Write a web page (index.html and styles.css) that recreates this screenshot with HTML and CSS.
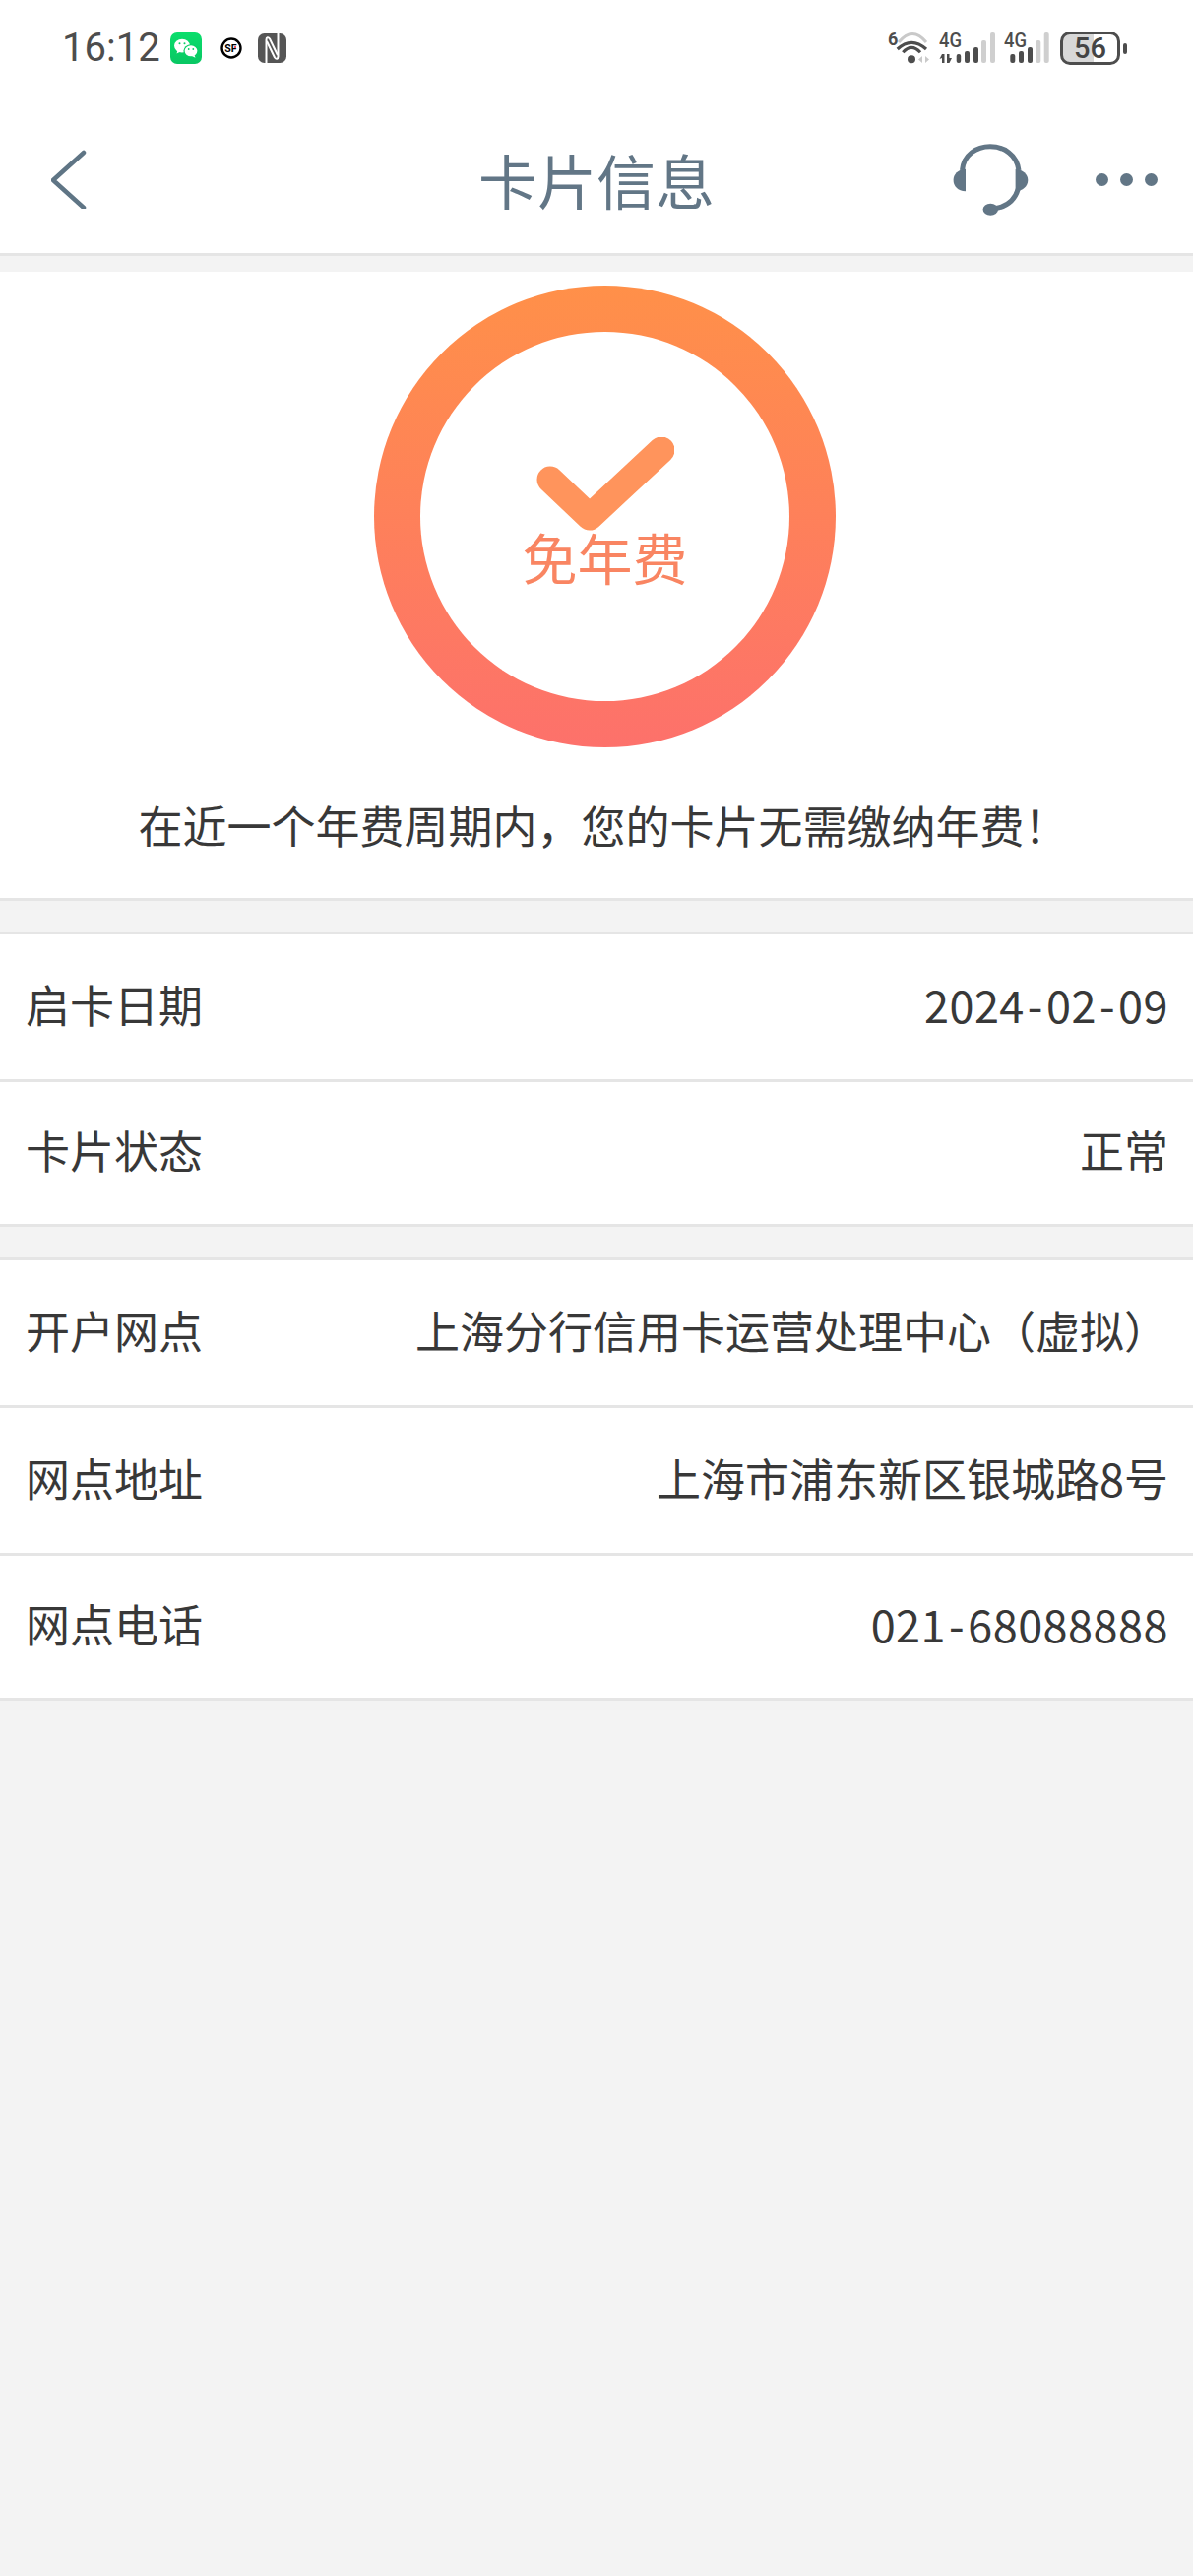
FILE: index.html
```html
<!DOCTYPE html>
<html>
<head>
<title>卡片信息</title>
<meta charset="utf-8">
<link rel="stylesheet" href="styles.css">
</head>
<body>

<div class="head">
    <div class="status">
        <span class="time">16:12</span>
        <svg class="ic-wechat" width="32" height="32" viewBox="0 0 32 32">
            <defs><linearGradient id="wx" x1="0" y1="0" x2="0" y2="1"><stop offset="0" stop-color="#0ade6c"/><stop offset="1" stop-color="#09c763"/></linearGradient></defs>
            <rect width="32" height="32" rx="7" fill="url(#wx)"/>
            <ellipse cx="12" cy="13.6" rx="8" ry="6.8" fill="#fff"/>
            <path d="M7.5 18l-1 3.5 4-2z" fill="#fff"/>
            <ellipse cx="21" cy="18.8" rx="7.6" ry="6.6" fill="#09d066"/>
            <ellipse cx="21" cy="18.8" rx="6.4" ry="5.5" fill="#fff"/>
            <path d="M24.5 23l1 2.8-3.6-1.8z" fill="#fff"/>
            <circle cx="9.5" cy="11.3" r="1" fill="#09d066"/>
            <circle cx="14.5" cy="11.3" r="1" fill="#09d066"/>
            <circle cx="18.7" cy="17" r=".9" fill="#09d066"/>
            <circle cx="23.3" cy="17" r=".9" fill="#09d066"/>
        </svg>
        <svg class="ic-sf" width="22" height="22" viewBox="0 0 22 22">
            <circle cx="11" cy="11" r="9.5" fill="none" stroke="#000" stroke-width="2.4"/>
            <text x="4.2" y="15" class="sf-text">SF</text>
            <circle cx="15" cy="10" r="1" fill="#e8202c"/>
        </svg>
        <svg class="ic-nfc" width="29" height="30" viewBox="0 0 29 30">
            <rect width="29" height="30" rx="6.5" fill="#555"/>
            <path d="M8.500 30V6.500C8.500 4 10.500 3.500 12 5.500L20 22" fill="none" stroke="#fff" stroke-width="2"/>
            <path d="M20.500 0V23.500C20.500 26 18.500 26.500 17 24.500L9 8" fill="none" stroke="#fff" stroke-width="2"/>
        </svg>
        <div class="status-right">
            <svg width="43" height="42" viewBox="0 -4 43 42">
                <text x="0" y="13.500" class="net-text six">6</text>
                <path d="M11 11Q25-6 39 11" fill="none" stroke="#c9c9c9" stroke-width="3"/>
                <path d="M9.700 18Q24 4.600 39 18" fill="none" stroke="#4d4d4d" stroke-width="3.200"/>
                <path d="M15.300 21.300Q24 11.300 33 21.300" fill="none" stroke="#4d4d4d" stroke-width="3.200"/>
                <circle cx="24" cy="28.300" r="4" fill="#4d4d4d"/>
                <path d="M35 25v7l-4-3.500zM38 25v7l4-3.500z" fill="#c9c9c9"/>
            </svg>
            <svg width="57" height="42" viewBox="0 -4 57 42">
                <text x="0" y="16" class="net-text" textLength="23" lengthAdjust="spacingAndGlyphs">4G</text>
                <path d="M3 23h2.500v9H3v-5l-2.500 1zM8 23h2.500v4l2.500 0-2.500 5H8z" fill="#4d4d4d"/>
                <rect x="17.700" y="23" width="4.500" height="9" rx="2" fill="#4d4d4d"/>
                <rect x="26" y="20" width="5" height="12" rx="2" fill="#4d4d4d"/>
                <rect x="35" y="16" width="5" height="16" rx="2" fill="#4d4d4d"/>
                <rect x="43" y="9" width="5" height="23" rx="2" fill="#cfcfcf"/>
                <rect x="52" y="1" width="5" height="31" rx="2" fill="#cfcfcf"/>
            </svg>
            <svg width="46" height="42" viewBox="0 -4 46 42">
                <text x="0" y="16" class="net-text" textLength="23" lengthAdjust="spacingAndGlyphs">4G</text>
                <rect x="6.300" y="23" width="5" height="9" rx="2" fill="#4d4d4d"/>
                <rect x="15" y="20" width="5" height="12" rx="2" fill="#4d4d4d"/>
                <rect x="24" y="16" width="5" height="16" rx="2" fill="#4d4d4d"/>
                <rect x="32.300" y="9" width="5" height="23" rx="2" fill="#cfcfcf"/>
                <rect x="40.700" y="1" width="5" height="31" rx="2" fill="#cfcfcf"/>
            </svg>
            <div class="battery"><span class="battery-num">56</span></div>
            <i class="battery-nub"></i>
        </div>
    </div>

    <div class="nav">
        <svg class="back" width="36" height="60" viewBox="0 0 36 60">
            <path d="M33 3L2 31l31 28" fill="none" stroke="#5f7585" stroke-width="4.500" stroke-linecap="round" stroke-linejoin="round"/>
        </svg>
        <div class="title">卡片信息</div>
        <div class="nav-right">
            <svg width="77" height="73" viewBox="0 0 77 73">
                <path d="M9.500 27C11 11 24 2.800 38 2.800S65 11 67 27" fill="none" stroke="#627686" stroke-width="5"/>
                <path d="M13 25.700C5 26 .6 31 .6 37S5 48 13 48.300z" fill="#627686"/>
                <path d="M63.600 25.700C71 26 76.300 31 76.300 37S71 48 63.600 48.300z" fill="#627686"/>
                <path d="M66.300 46C63 57 55 63.500 44 65.500" fill="none" stroke="#627686" stroke-width="5"/>
                <ellipse cx="38.300" cy="66.700" rx="7.700" ry="6" fill="#627686"/>
            </svg>
            <div class="dots"><i></i><i></i><i></i></div>
        </div>
    </div>
</div>

<div class="card">
    <div class="ring">
        <div class="ring-in">
            <svg class="check" width="140" height="97" viewBox="0 0 140 97">
                <path d="M14 43L54 81 127 13" fill="none" stroke="#ff945c" stroke-width="27" stroke-linecap="round" stroke-linejoin="round"/>
            </svg>
            <div class="ring-text">免年费</div>
        </div>
    </div>
    <p class="msg">在近一个年费周期内，您的卡片无需缴纳年费！</p>
</div>

<ul class="list">
    <li><span>启卡日期</span><span class="num">2024<b>-</b>02<b>-</b>09</span></li>
    <li><span>卡片状态</span><span>正常</span></li>
</ul>

<ul class="list">
    <li><span>开户网点</span><span>上海分行信用卡运营处理中心（虚拟）</span></li>
    <li><span>网点地址</span><span>上海市浦东新区银城路8号</span></li>
    <li><span>网点电话</span><span class="num">021<b>-</b>68088888</span></li>
</ul>

</body>
</html>
```

FILE: styles.css
```css
*{margin:0;padding:0;box-sizing:border-box;}
html,body{height:100%;}
body{background:#f3f3f3;font-family:"Noto Sans CJK SC","Noto Sans",sans-serif;color:#383838;}
ul,li{list-style:none;}
i{display:block;}

.head{background:#fff;border-bottom:3px solid #e5e5e5;height:260px;}

.status{height:107px;display:flex;align-items:center;padding:0 67px 9px 63px;}
.time{font-family:Roboto,sans-serif;font-size:40px;color:#4d4d4d;line-height:48px;width:110px;}
.ic-sf{margin-left:19px;}
.ic-nfc{margin-left:16px;}
.sf-text{font-family:Roboto,sans-serif;font-weight:700;font-size:10.5px;fill:#000;}
.net-text{font-family:Roboto,sans-serif;font-weight:500;font-size:20px;fill:#4d4d4d;}
.six{font-size:18px;font-weight:700;}
.status-right{margin-left:auto;display:flex;align-items:center;gap:9px;}
.battery{width:61px;height:34px;margin-left:2px;border:3px solid #4d4d4d;border-radius:10px;background:linear-gradient(90deg,#d8d8d8 57%,#fff 57%);display:flex;align-items:center;justify-content:center;}
.battery-num{font-family:Roboto,sans-serif;font-weight:500;font-size:29px;line-height:28px;color:#444;}
.battery-nub{width:4px;height:11px;background:#4d4d4d;border-radius:2px;margin-left:-6px;}

.nav{height:150px;display:grid;grid-template-columns:1fr auto 1fr;align-items:center;padding:0 36px;}
.back{display:block;margin-left:16px;}
.title{font-size:60px;line-height:70px;color:#627686;}
.nav-right{display:flex;align-items:center;justify-content:flex-end;gap:68px;}
.dots{display:flex;gap:12px;}
.dots i{width:13px;height:13px;border-radius:50%;background:#627686;}

.card{background:#fff;border-bottom:3px solid #e5e5e5;margin-top:16px;padding:14px 0 41px;}
.ring{width:469px;height:469px;margin-left:380px;padding:47px;border-radius:50%;background:linear-gradient(180deg,#ff9049,#fd716b);}
.ring-in{width:375px;height:375px;border-radius:50%;background:#fff;display:flex;flex-direction:column;align-items:center;padding-top:107px;}
.check{display:block;flex:none;}
.ring-text{font-size:56px;line-height:54px;color:#f98562;margin-top:-3px;}
.msg{font-size:45px;line-height:60px;text-align:center;margin-top:49px;padding:0 0 3px 14px;}

.list{background:#fff;border-top:3px solid #e5e5e5;border-bottom:3px solid #e5e5e5;margin-top:31px;}
.list li{height:150px;display:flex;align-items:center;justify-content:space-between;padding:0 25px 6px 26px;border-bottom:3px solid #e5e5e5;font-size:45px;line-height:60px;}
.list li:last-child{height:144px;border-bottom:0;}
.num{letter-spacing:.5px;}
.num b{font-weight:400;margin:0 3px;}
```
